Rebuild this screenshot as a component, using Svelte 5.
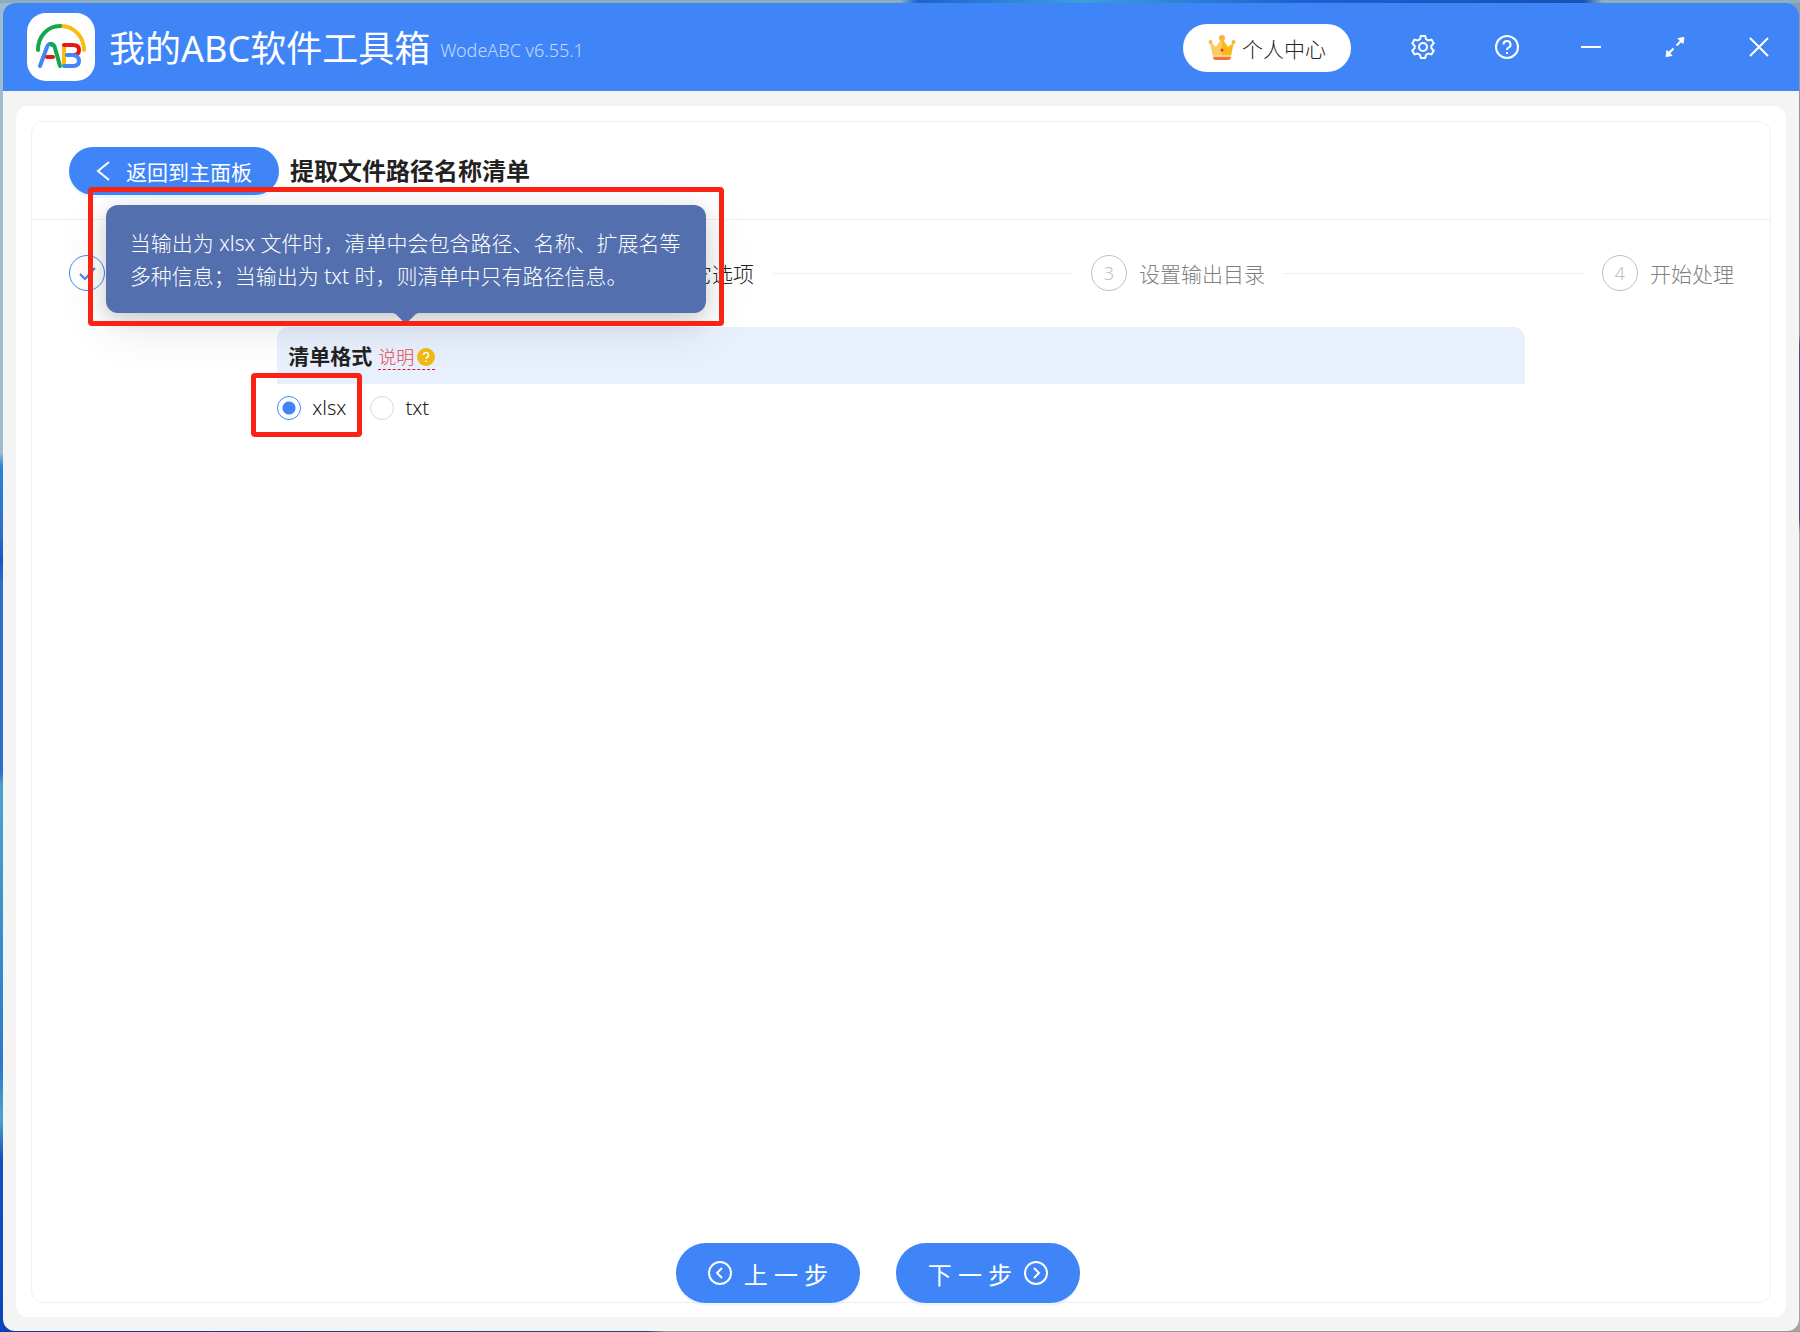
<script lang="ts">
  const steps = [
    { label: '', state: 'done' },
    { label: '设置其它选项', state: 'active' },
    { label: '设置输出目录', state: 'wait' },
    { label: '开始处理', state: 'wait' },
  ];

  const formats = ['xlsx', 'txt'];
  let format = $state('xlsx');
</script>

<div class="desktop">
  <div class="window">
    <header class="titlebar">
      <svg class="logo" viewBox="0 0 68 68" aria-hidden="true">
        <rect width="68" height="68" rx="19" fill="#fff" />
        <g fill="none" stroke-width="4" stroke-linecap="round" stroke-linejoin="round">
          <path d="M57 37C57 24 47 13 34 13" stroke="#fbbc12" />
          <path d="M11 37C11 24 20 13 33 13" stroke="#0fa84c" />
          <path d="M13 53l7-19q2-5 5-2" stroke="#4187f5" />
          <path d="M24 31q3 0 4 4l5 18" stroke="#0fa84c" />
          <path d="M20 44h6" stroke="#ea1515" />
          <path d="M37 33v19" stroke="#fbbc12" />
          <path d="M37 32h9q6 0 6 5t-5 5" stroke="#ea1515" />
          <path d="M40 42h6q6 1 6 6t-6 5h-9" stroke="#4187f5" />
        </g>
      </svg>
      <h1 class="app-name">我的ABC软件工具箱</h1>
      <span class="version">WodeABC v6.55.1</span>

      <button class="profile" type="button">
        <svg width="28" height="26" viewBox="0 0 28 26" aria-hidden="true">
          <path d="M2 7l6 5 6-9 6 9 6-5-3 14H5z" fill="#fdb913" />
          <path d="M2 7l6 5 6-9v18H5z" fill="#fbcb66" />
          <circle cx="14" cy="3" r="3" fill="#fbb03b" />
          <circle cx="2.500" cy="7" r="2" fill="#fbb95c" />
          <circle cx="25.500" cy="7" r="2" fill="#fbb03b" />
          <path d="M5 21h18v1q0 3-3 3H8q-3 0-3-3z" fill="#f0743a" />
          <path d="M5 20h18v2H5z" fill="#fbd08a" />
          <circle cx="14" cy="15" r="1.500" fill="#d93a1c" />
        </svg>
        个人中心
      </button>

      <nav class="tools">
        <button type="button" aria-label="设置">
          <svg viewBox="0 0 24 24">
            <path d="M9.800 1h4.400l.8 3.200 2.300 1.300 3.200-.9 2.200 3.800-2.300 2.300v2.600l2.300 2.300-2.200 3.800-3.200-.9-2.300 1.300-.8 3.200H9.800L9 19.800l-2.300-1.300-3.200.9-2.200-3.800 2.300-2.300v-2.600L1.300 8.400l2.200-3.800 3.200.9L9 4.200z" />
            <circle cx="12" cy="12" r="4" />
          </svg>
        </button>
        <button type="button" aria-label="帮助">
          <svg viewBox="0 0 24 24">
            <circle cx="12" cy="12" r="11" />
            <path d="M8.500 9.500a3.500 3.500 0 1 1 5 3.200q-1.500.8-1.500 2.300" />
            <path d="M12 17v2" />
          </svg>
        </button>
        <button type="button" aria-label="最小化">
          <svg viewBox="0 0 24 24"><path d="M2 12h20" /></svg>
        </button>
        <button type="button" aria-label="最大化">
          <svg viewBox="0 0 24 24">
            <path d="M13.500 10.500l5-5M10.500 13.500l-5 5" />
            <path d="M15 3.500l6-1-1 6zM9 20.500l-6 1 1-6z" class="solid" />
          </svg>
        </button>
        <button type="button" aria-label="关闭">
          <svg viewBox="0 0 24 24"><path d="M3 3l18 18M21 3L3 21" /></svg>
        </button>
      </nav>
    </header>

    <main class="page">
      <section class="panel">
        <div class="panel-head">
          <button class="btn back" type="button">
            <svg width="14" height="20" viewBox="0 0 14 20" aria-hidden="true">
              <path d="M13 1L2 10l11 9" />
            </svg>
            返回到主面板
          </button>
          <h2>提取文件路径名称清单</h2>
        </div>

        <ol class="steps">
          {#each steps as step, i}
            <li class="step {step.state}">
              <span class="step-icon">
                {#if step.state === 'done'}
                  <svg width="18" height="18" viewBox="0 0 18 18" aria-hidden="true">
                    <path d="M2 10l5 5L17 4" />
                  </svg>
                {:else}
                  {i + 1}
                {/if}
              </span>
              {#if step.label}
                <span class="step-label">{step.label}</span>
              {/if}
            </li>
          {/each}
        </ol>

        <fieldset class="option">
          <legend class="option-head">
            <span class="option-title">清单格式</span>
            <span class="hint">
              说明
              <svg width="18" height="18" viewBox="0 0 18 18" aria-hidden="true">
                <circle cx="9" cy="9" r="9" fill="#f0bb10" />
                <path d="M6.500 7a2.500 2.500 0 1 1 3.500 2.300q-1 .5-1 1.700M9 12.500v1.500" fill="none" stroke="#fff" stroke-width="1.500" />
              </svg>
              <span class="tooltip" role="tooltip">
                当输出为 xlsx 文件时，清单中会包含路径、名称、扩展名等多种信息；当输出为 txt 时，则清单中只有路径信息。
                <span class="mark mark-tooltip"></span>
              </span>
            </span>
          </legend>
          <div class="radios">
            {#each formats as name}
              <label class="radio">
                <input type="radio" name="format" value={name} bind:group={format} />
                {name}
                {#if name === format}
                  <span class="mark mark-radio"></span>
                {/if}
              </label>
            {/each}
          </div>
        </fieldset>

        <footer class="actions">
          <button class="btn step-btn" type="button">
            <svg width="24" height="24" viewBox="0 0 24 24" aria-hidden="true">
              <circle cx="12" cy="12" r="11" />
              <path d="M14 7l-5 5 5 5" />
            </svg>
            上 一 步
          </button>
          <button class="btn step-btn" type="button">
            下 一 步
            <svg width="24" height="24" viewBox="0 0 24 24" aria-hidden="true">
              <circle cx="12" cy="12" r="11" />
              <path d="M10 7l5 5-5 5" />
            </svg>
          </button>
        </footer>
      </section>
    </main>
  </div>
</div>

<style>
  :global(body) {
    margin: 0;
  }

  .desktop {
    box-sizing: border-box;
    min-height: 100vh;
    display: flex;
    padding: 3px 1px 1px 3px;
    font-family: 'Noto Sans', 'Noto Sans CJK SC', sans-serif;
    font-size: 21px;
    font-weight: 300;
    color: #222;
    background:
      linear-gradient(90deg, #8badbd 50%, #1c62d0 51%, #3aa0dc 60%, #1c62d0 72%, #1551b8 88%, #8badbd 89%) top / 100% 3px no-repeat,
      linear-gradient(90deg, #14389a, #26457e 36%, #999 37%) bottom / 100% 1px no-repeat,
      linear-gradient(#9dbccd 34%, #2a83d8 35%, #2c70cc 40%, #1a55c8 42%, #2c70cc 44%, #2c70cc 58%, #4aa5cc 59%, #2c78cc 80%, #4aa5cc 84%, #1550c0 87%, #0d45b8) left / 50% 100% no-repeat,
      linear-gradient(#8b9aa5 25%, #3a5480 26%, #3a5480 39%, #a5a5a5 40%);
  }

  .window {
    flex: 1;
    display: flex;
    flex-direction: column;
    border-radius: 12px;
    overflow: hidden;
    background: #f4f4f4;
  }

  button {
    font: inherit;
    border: 0;
    padding: 0;
    cursor: pointer;
  }

  .titlebar {
    display: flex;
    align-items: center;
    height: 88px;
    padding: 0 28px 0 24px;
    background: #3f85f7;
    color: #fff;
  }

  .logo {
    width: 68px;
    height: 68px;
    margin-right: 14px;
  }

  .app-name {
    margin: 0;
    padding-top: 4px;
    font-size: 36px;
    line-height: 48px;
    font-weight: 400;
  }

  .version {
    margin-left: 10px;
    padding-top: 6px;
    font-size: 18px;
    color: rgba(255, 255, 255, 0.7);
  }

  .profile {
    display: flex;
    align-items: center;
    justify-content: center;
    gap: 6px;
    width: 168px;
    height: 48px;
    margin-top: 2px;
    margin-left: auto;
    border-radius: 24px;
    background: #fff;
    color: #222;
  }

  .tools {
    display: flex;
    gap: 60px;
    margin-left: 60px;
  }

  .tools button {
    width: 24px;
    height: 24px;
    background: none;
  }

  .tools svg {
    display: block;
    fill: none;
    stroke: #fff;
    stroke-width: 2;
  }

  .tools .solid {
    fill: #fff;
    stroke-width: 1;
  }

  .page {
    flex: 1;
    display: flex;
    margin: 15px 13px 14px;
    padding: 15px 15px 14px;
    border-radius: 12px;
    background: #fff;
  }

  .panel {
    flex: 1;
    display: flex;
    flex-direction: column;
    border: 1px solid #f0f0f0;
    border-radius: 12px;
  }

  .panel-head {
    display: flex;
    align-items: center;
    gap: 11px;
    padding: 25px 37px 24px;
    border-bottom: 1px solid #f0f0f0;
  }

  .panel-head h2 {
    margin: 0;
    font-size: 24px;
    line-height: 36px;
    font-weight: 700;
  }

  .btn {
    display: flex;
    align-items: center;
    justify-content: center;
    background: #3f85f7;
    color: #fff;
    box-shadow: 0 3px 0 rgba(5, 100, 255, 0.06);
  }

  .btn svg {
    fill: none;
    stroke: #fff;
    stroke-width: 2;
  }

  .back {
    gap: 16px;
    width: 210px;
    height: 48px;
    border-radius: 24px;
    font-weight: 400;
  }

  .steps {
    display: flex;
    margin: 0;
    padding: 35px 36px 36px 37px;
    list-style: none;
  }

  .step {
    flex: 1;
    display: flex;
    align-items: center;
    margin-right: 18px;
    white-space: nowrap;
  }

  .step:last-child {
    flex: none;
    margin-right: 0;
  }

  .step:not(:last-child)::after {
    content: '';
    flex: 1;
    height: 1px;
    margin-left: 18px;
    background: #f0f0f0;
  }

  .step-icon {
    box-sizing: border-box;
    display: flex;
    align-items: center;
    justify-content: center;
    width: 36px;
    height: 36px;
    margin-right: 12px;
    border: 1px solid #bfbfbf;
    border-radius: 50%;
    font-size: 18px;
    color: #bfbfbf;
  }

  .step.done .step-icon {
    border-color: #3f85f7;
  }

  .step.active .step-icon {
    border-color: #3f85f7;
    background: #3f85f7;
    color: #fff;
  }

  .step-icon svg {
    fill: none;
    stroke: #3f85f7;
    stroke-width: 2;
  }

  .step.wait .step-label {
    color: #808080;
  }

  .option {
    box-sizing: border-box;
    width: calc(75% - 56px);
    min-width: 0;
    margin: 0 auto;
    padding: 0;
    border: 0;
  }

  .option-head {
    box-sizing: border-box;
    display: flex;
    align-items: center;
    gap: 6px;
    width: 100%;
    height: 57px;
    padding: 3px 11px 0;
    border-radius: 12px 12px 0 0;
    background: #e8effd;
  }

  .option-title {
    line-height: 30px;
    padding-bottom: 2px;
    font-weight: 700;
  }

  .hint {
    position: relative;
    display: flex;
    align-items: center;
    gap: 3px;
    border-bottom: 1px dashed #c41d2f;
    font-size: 18px;
    line-height: 24px;
    color: #e5484d;
  }

  .tooltip {
    position: absolute;
    left: 50%;
    bottom: 100%;
    box-sizing: border-box;
    width: 600px;
    margin: 0 0 32px -301px;
    padding: 22px 24px 20px;
    border-radius: 12px;
    background: #536fae;
    box-shadow: 0 12px 48px rgba(0, 0, 0, 0.12), 0 6px 18px rgba(0, 0, 0, 0.12);
    color: #fff;
    font-size: 21px;
    line-height: 33px;
  }

  .tooltip::after {
    content: '';
    position: absolute;
    top: 100%;
    left: 50%;
    width: 28px;
    height: 10px;
    margin-left: -14px;
    background: #536fae;
    clip-path: polygon(0 0, 100% 0, 86% 14%, 60% 88%, 50% 100%, 40% 88%, 14% 14%);
  }

  .mark {
    position: absolute;
    border: 5px solid #f92314;
    border-radius: 4px;
    pointer-events: none;
  }

  .mark-tooltip {
    inset: -18px -18px -13px;
    z-index: 1;
  }

  .radios {
    display: flex;
    gap: 24px;
    padding-top: 9px;
  }

  .radio {
    position: relative;
    display: flex;
    align-items: center;
    gap: 11px;
    font-size: 20px;
    line-height: 30px;
    cursor: pointer;
  }

  .radio input {
    appearance: none;
    box-sizing: border-box;
    width: 24px;
    height: 24px;
    margin: 0;
    border: 1px solid #d9d9d9;
    border-radius: 50%;
    background: #fff;
  }

  .radio input:checked {
    border-color: #3f85f7;
    background: radial-gradient(circle, #3f85f7 6px, #fff 7px);
  }

  .mark-radio {
    inset: -20px -16px -14px -26px;
  }

  .actions {
    display: flex;
    justify-content: center;
    gap: 36px;
    margin: auto 46px -1px 0;
  }

  .step-btn {
    gap: 12px;
    width: 184px;
    height: 60px;
    border-radius: 30px;
    font-size: 24px;
    font-weight: 400;
  }
</style>
